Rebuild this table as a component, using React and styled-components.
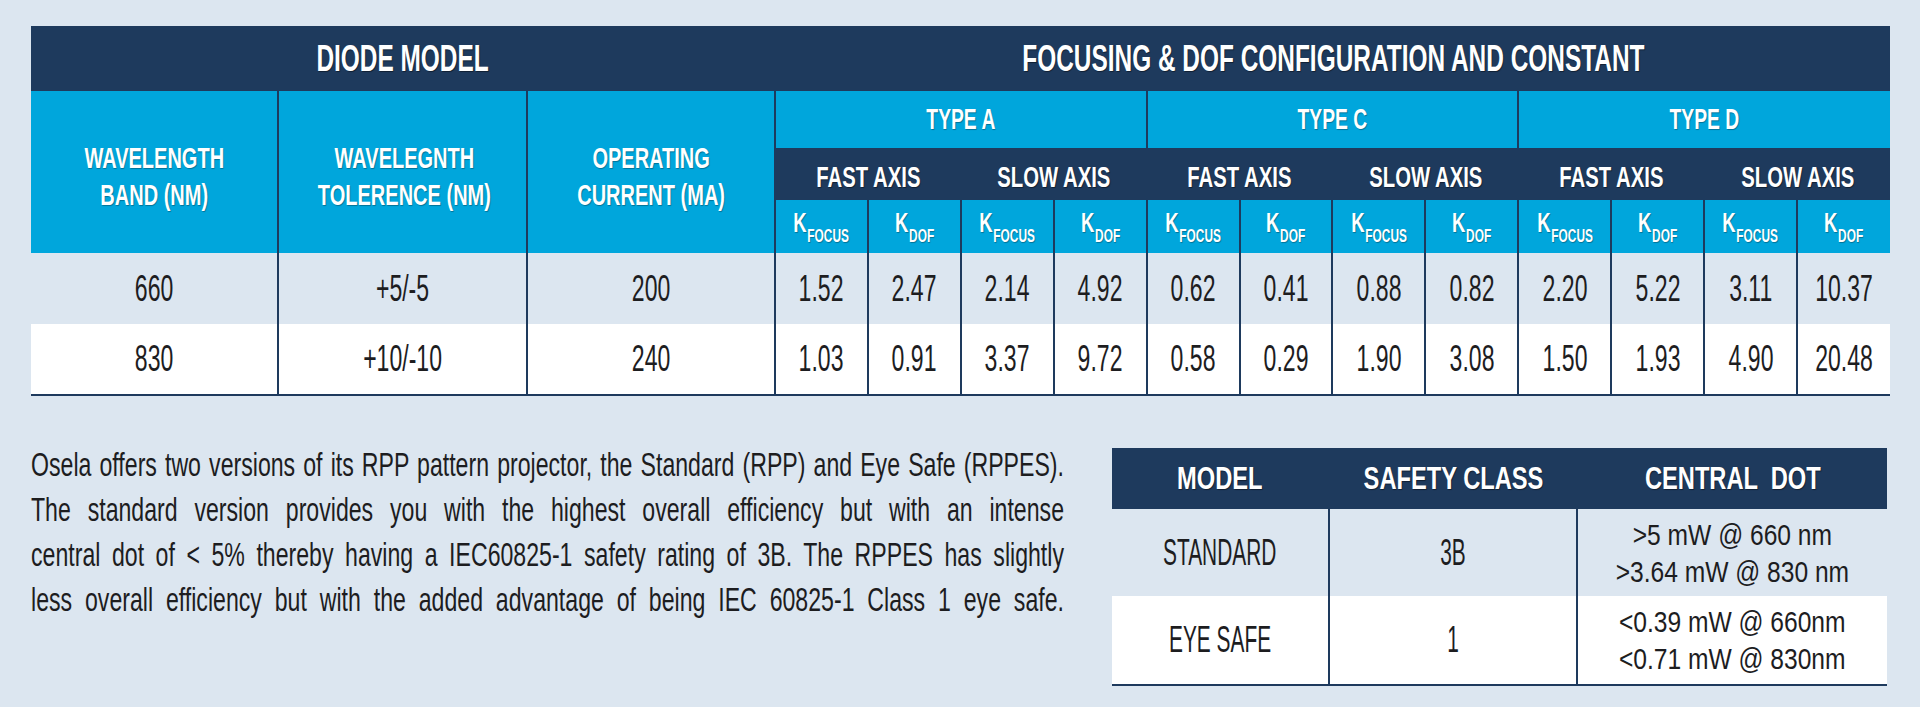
import React from 'react'
import styled, { createGlobalStyle } from 'styled-components'

const NAVY = '#1e3a5d'
const BLUE = '#00a6dc'
const PAGE = '#dce6f0'
const INK = '#1d1d1f'
const FONT = '"Liberation Sans", Arial, sans-serif'

const GlobalStyle = createGlobalStyle`
  html, body {
    margin: 0;
    padding: 0;
    background: ${PAGE};
  }
  body {
    font-family: ${FONT};
    color: ${INK};
  }
`

const tones = {
  navy: NAVY,
  blue: BLUE,
  light: 'transparent',
  white: '#ffffff'
}

const Page = styled.div`
  width: 1920px;
  height: 707px;
  box-sizing: border-box;
  padding: 26px 30px 0 31px;
  overflow: hidden;
`

// the reference uses a very condensed face, squeeze the sans to match it
const Squeeze = styled.span`
  display: inline-block;
  white-space: nowrap;
  transform-origin: 50% 50%;
`

const TitleText = styled(Squeeze)`
  font-size: 37px;
  font-weight: 700;
  color: #fff;
  transform: scaleX(0.66);
  text-shadow: 1px 1px 1px rgba(0, 0, 0, 0.45);
`

const ColText = styled(Squeeze)`
  font-size: 29px;
  line-height: 37px;
  font-weight: 700;
  color: #fff;
  transform: scaleX(0.69);
  text-shadow: 1px 1px 1px rgba(0, 0, 0, 0.3);
`

const TypeText = styled(Squeeze)`
  font-size: 29px;
  font-weight: 700;
  color: #fff;
  transform: scaleX(0.665);
  text-shadow: 1px 1px 1px rgba(0, 0, 0, 0.3);
`

const AxisText = styled(Squeeze)`
  font-size: 29px;
  font-weight: 700;
  color: #fff;
  transform: scaleX(0.7);
  text-shadow: 1px 1px 1px rgba(0, 0, 0, 0.45);
`

const KText = styled(Squeeze)`
  font-size: 28px;
  font-weight: 700;
  color: #fff;
  transform: scaleX(0.66);
  text-shadow: 1px 1px 1px rgba(0, 0, 0, 0.3);
`

const Sub = styled.span`
  font-size: 18px;
  vertical-align: -10px;
  margin-left: 1px;
`

const NumText = styled(Squeeze)`
  font-size: 36px;
  color: ${INK};
  transform: scaleX(0.64);
`

const Grid = styled.table`
  width: ${p => p.$w}px;
  table-layout: fixed;
  border-collapse: collapse;
  border-spacing: 0;
  border-bottom: 2px solid ${NAVY};
`

const Col = styled.col`
  width: ${p => p.$w}px;
`

const Row = styled.tr`
  height: ${p => p.$h}px;
`

const Cell = styled.td`
  padding: ${p => p.$padTop || 0}px 0 0;
  border: 0;
  border-right: 2px solid ${NAVY};
  background: ${p => tones[p.$tone] || 'transparent'};
  text-align: center;
  vertical-align: middle;
  &:last-child {
    border-right: 0;
  }
`

const Lower = styled.div`
  display: flex;
  align-items: flex-start;
  gap: 48px;
  margin-top: 46px;
`

const Para = styled.div`
  width: 1033px;
  flex: none;
  font-size: 34px;
  line-height: 45px;
  color: ${INK};
`

const ParaInner = styled.div`
  width: ${1033 / 0.68}px;
  transform: scaleX(0.68);
  transform-origin: 0 0;
`

const ParaLine = styled.span`
  display: block;
  text-align: justify;
  text-align-last: justify;
`

const SafetyWrap = styled.div`
  margin-top: 6px;
  flex: none;
`

const SafetyHead = styled(Squeeze)`
  font-size: 32px;
  font-weight: 700;
  color: #fff;
  white-space: pre;
  transform: scaleX(0.74);
  text-shadow: 1px 1px 1px rgba(0, 0, 0, 0.45);
`

const SafetyText = styled(Squeeze)`
  font-size: 36px;
  color: ${INK};
  transform: scaleX(0.58);
`

const DotText = styled(Squeeze)`
  font-size: 30px;
  line-height: 37px;
  color: ${INK};
  transform: scaleX(0.82);
`

const types = ['TYPE A', 'TYPE C', 'TYPE D']

const data = [
  ['660', '+5/-5', '200', '1.52', '2.47', '2.14', '4.92', '0.62', '0.41', '0.88', '0.82', '2.20', '5.22', '3.11', '10.37'],
  ['830', '+10/-10', '240', '1.03', '0.91', '3.37', '9.72', '0.58', '0.29', '1.90', '3.08', '1.50', '1.93', '4.90', '20.48']
]

const safety = [
  { model: 'STANDARD', cls: '3B', dot: ['>5 mW @ 660 nm', '>3.64 mW @ 830 nm'], tone: 'light', h: 87 },
  { model: 'EYE SAFE', cls: '1', dot: ['<0.39 mW @ 660nm', '<0.71 mW @ 830nm'], tone: 'white', h: 89 }
]

const paragraph = [
  'Osela offers two versions of its RPP pattern projector, the Standard (RPP) and Eye Safe (RPPES).',
  'The standard version provides you with the highest overall efficiency but with an intense',
  'central dot of < 5% thereby having a IEC60825-1 safety rating of 3B. The RPPES has slightly',
  'less overall efficiency but with the added advantage of being IEC 60825-1 Class 1 eye safe.'
]

const KLabel = ({ sub }) => (
  <KText>
    K<Sub>{sub}</Sub>
  </KText>
)

const DiodeTable = () => (
  <Grid $w={1859}>
    <colgroup>
      <Col $w={247} />
      <Col $w={249} />
      <Col $w={248} />
      {Array.from({ length: 12 }).map((_, i) => (
        <Col key={i} $w={1115 / 12} />
      ))}
    </colgroup>
    <tbody>
      <Row $h={65}>
        <Cell $tone="navy" colSpan={3}>
          <TitleText>DIODE MODEL</TitleText>
        </Cell>
        <Cell $tone="navy" colSpan={12}>
          <TitleText>FOCUSING &amp; DOF CONFIGURATION AND CONSTANT</TitleText>
        </Cell>
      </Row>
      <Row $h={57}>
        <Cell $tone="blue" rowSpan={3} $padTop={9}>
          <ColText>WAVELENGTH<br />BAND (NM)</ColText>
        </Cell>
        <Cell $tone="blue" rowSpan={3} $padTop={9}>
          <ColText>WAVELEGNTH<br />TOLERENCE (NM)</ColText>
        </Cell>
        <Cell $tone="blue" rowSpan={3} $padTop={9}>
          <ColText>OPERATING<br />CURRENT (MA)</ColText>
        </Cell>
        {types.map(t => (
          <Cell key={t} $tone="blue" colSpan={4}>
            <TypeText>{t}</TypeText>
          </Cell>
        ))}
      </Row>
      <Row $h={52}>
        {types.map(t => (
          <React.Fragment key={t}>
            <Cell $tone="navy" colSpan={2} $padTop={6}>
              <AxisText>FAST AXIS</AxisText>
            </Cell>
            <Cell $tone="navy" colSpan={2} $padTop={6}>
              <AxisText>SLOW AXIS</AxisText>
            </Cell>
          </React.Fragment>
        ))}
      </Row>
      <Row $h={53}>
        {Array.from({ length: 12 }).map((_, i) => (
          <Cell key={i} $tone="blue">
            <KLabel sub={i % 2 === 0 ? 'FOCUS' : 'DOF'} />
          </Cell>
        ))}
      </Row>
      {data.map((row, r) => (
        <Row key={r} $h={71}>
          {row.map((v, i) => (
            <Cell key={i} $tone={r === 0 ? 'light' : 'white'}>
              <NumText>{v}</NumText>
            </Cell>
          ))}
        </Row>
      ))}
    </tbody>
  </Grid>
)

const SafetyTable = () => (
  <SafetyWrap>
    <Grid $w={775}>
      <colgroup>
        <Col $w={217} />
        <Col $w={248} />
        <Col $w={310} />
      </colgroup>
      <tbody>
        <Row $h={61}>
          <Cell $tone="navy">
            <SafetyHead>MODEL</SafetyHead>
          </Cell>
          <Cell $tone="navy">
            <SafetyHead>SAFETY CLASS</SafetyHead>
          </Cell>
          <Cell $tone="navy">
            <SafetyHead>CENTRAL  DOT</SafetyHead>
          </Cell>
        </Row>
        {safety.map(s => (
          <Row key={s.model} $h={s.h}>
            <Cell $tone={s.tone}>
              <SafetyText>{s.model}</SafetyText>
            </Cell>
            <Cell $tone={s.tone}>
              <SafetyText>{s.cls}</SafetyText>
            </Cell>
            <Cell $tone={s.tone}>
              <DotText>
                {s.dot[0]}
                <br />
                {s.dot[1]}
              </DotText>
            </Cell>
          </Row>
        ))}
      </tbody>
    </Grid>
  </SafetyWrap>
)

export default function App() {
  return (
    <>
      <GlobalStyle />
      <Page>
        <DiodeTable />
        <Lower>
          <Para>
            <ParaInner>
              {paragraph.map((line, i) => (
                <ParaLine key={i}>{line}</ParaLine>
              ))}
            </ParaInner>
          </Para>
          <SafetyTable />
        </Lower>
      </Page>
    </>
  )
}
